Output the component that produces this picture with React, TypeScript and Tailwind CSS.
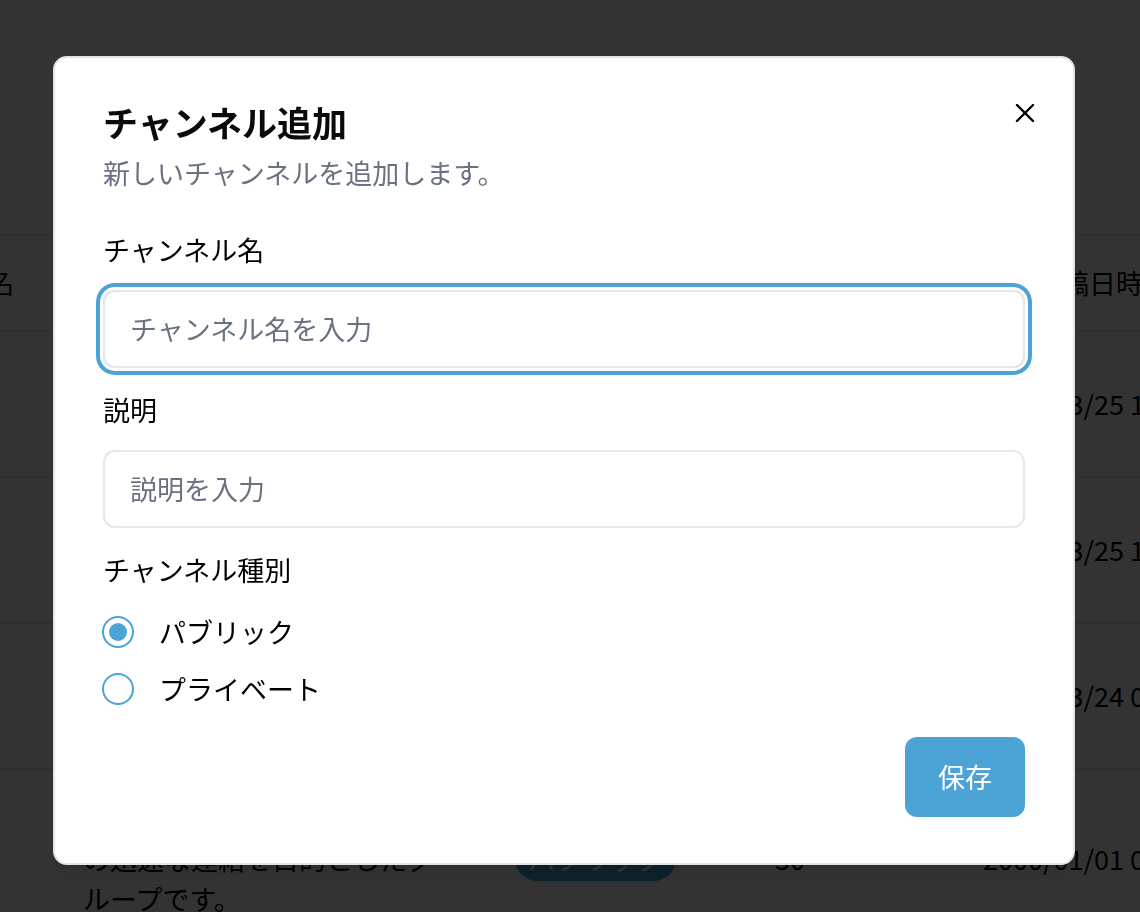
import React from 'react';

const ROWS = [
  { name: '全体連絡', desc: '全社員向けのお知らせ用です。', type: 'パブリック', members: '120', date: '2025/03/25 10:24', h: 'h-[146px]' },
  { name: '開発チーム', desc: '開発メンバーの情報共有用。', type: 'プライベート', members: '12', date: '2025/03/25 18:02', h: 'h-[146px]' },
  { name: '雑談', desc: '業務外の雑談用チャンネル。', type: 'パブリック', members: '85', date: '2025/03/24 09:15', h: 'h-[146px]' },
  { name: '営業部', desc: 'プロジェクトメンバー同士での迅速な連絡を目的としたグループです。', type: 'パブリック', members: '30', date: '2000/01/01 00:00', h: 'h-[180px]' },
];

const ChannelTable: React.FC = () => (
  <div className="w-full overflow-hidden">
    <div className="-ml-[147px] w-[1422px] text-[27px] leading-[40px] text-black">
      <div className="grid grid-cols-[230px_432px_260px_200px_300px] items-center h-[98px] border-y-2 border-gray-200">
        <span>チャンネル名</span>
        <span>説明</span>
        <span>種別</span>
        <span>メンバー数</span>
        <span className="pl-[6px]">最終投稿日時</span>
      </div>
      {ROWS.map((row, i) => (
        <div key={i} className={`grid grid-cols-[230px_432px_260px_200px_300px] items-center border-b-2 border-gray-200 ${row.h}`}>
          <span>{row.name}</span>
          <span className="w-[360px]">{row.desc}</span>
          <span>
            <span className="inline-flex items-center h-[44px] px-[13px] rounded-full bg-[#4ba3d6] text-white">{row.type}</span>
          </span>
          <span>{row.members}</span>
          <span className="pl-[8px]">{row.date}</span>
        </div>
      ))}
    </div>
  </div>
);

const RadioOption: React.FC<{ label: string; checked?: boolean }> = ({ label, checked }) => (
  <label className="flex items-center gap-[25px] h-[40px] -ml-px">
    <span className="w-[32px] h-[32px] rounded-full border-2 border-[#4ba3d6] flex items-center justify-center">
      {checked && <span className="w-[18px] h-[18px] rounded-full bg-[#4ba3d6]"></span>}
    </span>
    <span className="text-[27px] leading-[40px] text-black">{label}</span>
  </label>
);

export default function App() {
  return (
    <div className="relative min-h-screen bg-white font-['Noto_Sans_CJK_JP',sans-serif] overflow-hidden">
      {/* Page behind the dialog */}
      <div className="h-[234px] px-[83px] pt-[110px]">
        <h1 className="text-[36px] font-bold text-black">チャンネル管理</h1>
      </div>
      <ChannelTable />

      {/* Overlay */}
      <div className="fixed inset-0 bg-black/80">
        <div className="pl-[53px] pt-[56px]">
          <div className="relative w-[1022px] h-[809px] bg-white border-2 border-[#e4e4e7] rounded-[14px] px-12 pt-12 pb-[46px] shadow-lg">
            <button className="absolute top-[45px] right-[38px] w-[20px] h-[20px] text-black">
              <svg width="20" height="20" viewBox="0 0 20 20" fill="none" stroke="currentColor" strokeWidth="2.4" strokeLinecap="round">
                <path d="M2 2 18 18" />
                <path d="M18 2 2 18" />
              </svg>
            </button>

            <h2 className="text-[35px] leading-[32px] font-bold text-[#0a0a0a]">チャンネル追加</h2>
            <p className="mt-[15px] text-[27px] leading-[40px] text-gray-500">新しいチャンネルを追加します。</p>

            <div className="mt-[37px] text-[27px] leading-[40px] text-black">チャンネル名</div>
            <div className="mt-[20px] h-[78px] rounded-[12px] border-2 border-gray-200 flex items-center pl-[25px] ring-4 ring-[#4ba3d6] ring-offset-[3px] ring-offset-white">
              <span className="text-[27px] leading-[40px] text-gray-500">チャンネル名を入力</span>
            </div>

            <div className="mt-[22px] text-[27px] leading-[40px] text-black">説明</div>
            <div className="mt-[20px] h-[78px] rounded-[12px] border-2 border-gray-200 flex items-center pl-[25px]">
              <span className="text-[27px] leading-[40px] text-gray-500">説明を入力</span>
            </div>

            <div className="mt-[22px] text-[27px] leading-[40px] text-black">チャンネル種別</div>
            <div className="mt-[22px] flex flex-col gap-[17px]">
              <RadioOption label="パブリック" checked />
              <RadioOption label="プライベート" />
            </div>

            <div className="mt-[28px] flex justify-end">
              <button className="w-[120px] h-[80px] rounded-[12px] bg-[#4ba3d6] text-white text-[27px] leading-[40px]">保存</button>
            </div>
          </div>
        </div>
      </div>
    </div>
  );
}
